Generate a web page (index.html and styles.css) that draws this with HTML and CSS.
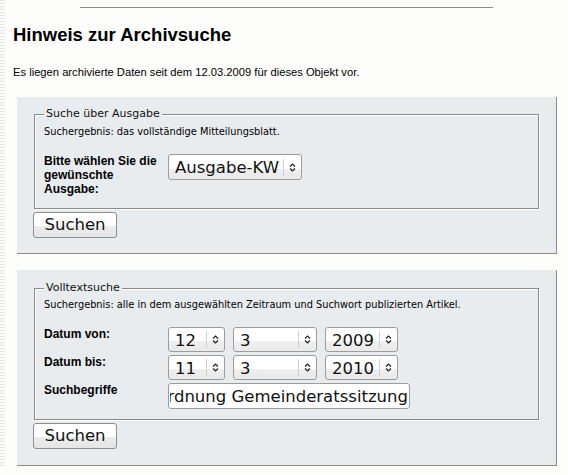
FILE: index.html
```html
<!DOCTYPE html>
<html lang="de">
<head>
<meta charset="utf-8">
<title>Hinweis zur Archivsuche</title>
<link rel="stylesheet" href="styles.css">
</head>
<body>
<div class="page">
  <div class="rule"></div>
  <h2 class="title">Hinweis zur Archivsuche</h2>
  <p class="intro">Es liegen archivierte Daten seit dem 12.03.2009 für dieses Objekt vor.</p>

  <form class="panel panel-issue">
    <fieldset class="group group-issue">
      <legend class="legend">Suche über Ausgabe</legend>
      <p class="hint">Suchergebnis: das vollständige Mitteilungsblatt.</p>
      <div class="grid grid-issue">
        <label class="lbl">Bitte wählen Sie die gewünschte Ausgabe:</label>
        <span class="select sel-issue">
          <span class="val">Ausgabe-KW</span>
          <span class="arrow"><svg width="7" height="11" viewBox="0 0 7 11"><path d="M1 4.5 L3.5 2 L6 4.5 M1 6.5 L3.5 9 L6 6.5" fill="none" stroke="#222" stroke-width="1.2"/></svg></span>
        </span>
      </div>
    </fieldset>
    <button type="button" class="btn">Suchen</button>
  </form>

  <form class="panel panel-text">
    <fieldset class="group group-text">
      <legend class="legend">Volltextsuche</legend>
      <p class="hint">Suchergebnis: alle in dem ausgewählten Zeitraum und Suchwort publizierten Artikel.</p>
      <div class="grid">
        <label class="lbl">Datum von:</label>
        <div class="ctrls">
          <span class="select sel-day"><span class="val">12</span><span class="arrow"><svg width="7" height="11" viewBox="0 0 7 11"><path d="M1 4.5 L3.5 2 L6 4.5 M1 6.5 L3.5 9 L6 6.5" fill="none" stroke="#222" stroke-width="1.2"/></svg></span></span>
          <span class="select sel-month"><span class="val">3</span><span class="arrow"><svg width="7" height="11" viewBox="0 0 7 11"><path d="M1 4.5 L3.5 2 L6 4.5 M1 6.5 L3.5 9 L6 6.5" fill="none" stroke="#222" stroke-width="1.2"/></svg></span></span>
          <span class="select sel-year"><span class="val">2009</span><span class="arrow"><svg width="7" height="11" viewBox="0 0 7 11"><path d="M1 4.5 L3.5 2 L6 4.5 M1 6.5 L3.5 9 L6 6.5" fill="none" stroke="#222" stroke-width="1.2"/></svg></span></span>
        </div>
        <label class="lbl">Datum bis:</label>
        <div class="ctrls">
          <span class="select sel-day"><span class="val">11</span><span class="arrow"><svg width="7" height="11" viewBox="0 0 7 11"><path d="M1 4.5 L3.5 2 L6 4.5 M1 6.5 L3.5 9 L6 6.5" fill="none" stroke="#222" stroke-width="1.2"/></svg></span></span>
          <span class="select sel-month"><span class="val">3</span><span class="arrow"><svg width="7" height="11" viewBox="0 0 7 11"><path d="M1 4.5 L3.5 2 L6 4.5 M1 6.5 L3.5 9 L6 6.5" fill="none" stroke="#222" stroke-width="1.2"/></svg></span></span>
          <span class="select sel-year"><span class="val">2010</span><span class="arrow"><svg width="7" height="11" viewBox="0 0 7 11"><path d="M1 4.5 L3.5 2 L6 4.5 M1 6.5 L3.5 9 L6 6.5" fill="none" stroke="#222" stroke-width="1.2"/></svg></span></span>
        </div>
        <label class="lbl" for="q">Suchbegriffe</label>
        <div class="ctrls">
          <input id="q" class="textbox" type="text" dir="rtl" value="Tagesordnung Gemeinderatssitzung">
        </div>
      </div>
    </fieldset>
    <button type="button" class="btn">Suchen</button>
  </form>
</div>
</body>
</html>
```

FILE: styles.css
```css
html {
  background-color: #fdfefc;
  background-image: repeating-linear-gradient(to bottom, #e3e8e3 0, #e3e8e3 1px, #fbfcfa 1px, #fbfcfa 3px);
  background-size: 5px 100%;
  background-repeat: no-repeat;
}
body {
  margin: 0;
  color: #000;
  font-family: "Liberation Sans", Arial, sans-serif;
}
.page {
  padding: 7px 0 0 13px;
}
.rule {
  width: 413px;
  height: 1px;
  margin-left: 67px;
  background: #8a8a8a;
}
.title {
  margin: 16px 0 0;
  font-size: 18.5px;
  line-height: 22px;
  font-weight: bold;
}
.intro {
  margin: 19px 0 0;
  font-size: 11.2px;
  line-height: 14px;
}
.panel {
  margin: 18px 0 0 4px;
  padding: 10px 16px 15px 16px;
  box-sizing: border-box;
  width: 540px;
  background: #e8ecef;
  border-right: 1px solid #8c8c8c;
  border-bottom: 1px solid #8c8c8c;
}
.panel-text {
  margin-top: 16px;
  padding-top: 11px;
  padding-bottom: 16px;
}
.group {
  margin: 0 1px;
  padding: 0 9px 12px 9px;
  border: 1px solid #8a8a8a;
  box-shadow: inset 1px 1px 0 #fff, 1px 1px 0 #fff;
  min-width: 0;
}
.group-text {
  padding-bottom: 10px;
}
.legend {
  padding: 0 2px;
  font-family: "DejaVu Sans", sans-serif;
  font-size: 11px;
  line-height: 14px;
  color: #111;
  background: #e8ecef;
}
.hint {
  margin: 5px 0 0;
  font-family: "DejaVu Sans", sans-serif;
  font-size: 9.8px;
  line-height: 12px;
}
.group-text .hint {
  margin-top: 4px;
}
.grid {
  display: grid;
  grid-template-columns: 124px auto;
  row-gap: 3px;
  margin-top: 16px;
  align-items: start;
}
.grid-issue {
  margin-top: 16px;
}
.lbl {
  width: 118px;
  font-size: 12px;
  line-height: 14px;
  font-weight: bold;
}
.ctrls {
  display: flex;
  gap: 8px;
}
.select {
  display: inline-flex;
  align-items: center;
  height: 25px;
  box-sizing: border-box;
  border: 1px solid #9c9c9c;
  border-radius: 3px;
  background: linear-gradient(to bottom, #fff 0, #fff 58%, #efefef 58%, #e9e9e9 100%);
  font-family: "DejaVu Sans", sans-serif;
  font-size: 16.5px;
  line-height: 20px;
  color: #111;
}
.val {
  flex: 1;
  padding-left: 6px;
  padding-top: 2px;
  white-space: nowrap;
}
.arrow {
  display: flex;
  align-items: center;
  justify-content: center;
  width: 17px;
  height: 17px;
  border-left: 1px solid #d0d0d0;
}
.sel-issue { width: 134px; height: 26px; }
.sel-day { width: 57px; }
.sel-month { width: 84px; }
.sel-year { width: 73px; }
.textbox {
  display: block;
  width: 242px;
  height: 26px;
  margin: 0;
  box-sizing: border-box;
  border: 1px solid #9c9c9c;
  border-radius: 3px;
  background: #fff;
  font-family: "DejaVu Sans", sans-serif;
  font-size: 16.5px;
  color: #111;
  padding: 1px 1px 0 1px;
  outline: none;
}
.btn {
  display: block;
  margin-top: 3px;
  width: 84px;
  height: 26px;
  padding: 0;
  border: 1px solid #8e8e8e;
  border-radius: 3px;
  background: linear-gradient(to bottom, #fff 0, #fff 55%, #ececec 55%, #e4e4e4 100%);
  font-family: "DejaVu Sans", sans-serif;
  font-size: 16.5px;
  line-height: 22px;
  color: #111;
}
```
